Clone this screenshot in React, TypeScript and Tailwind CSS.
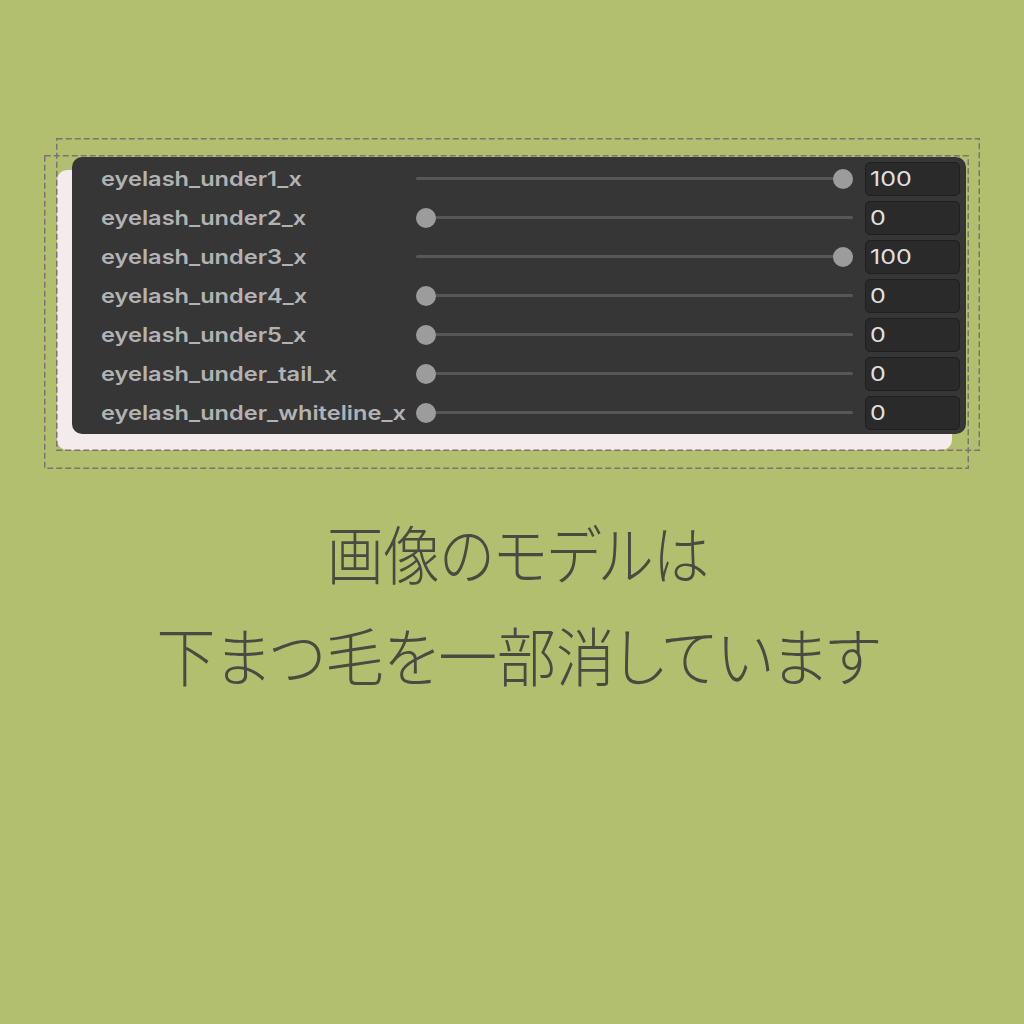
import React from "react";

type Param = { name: string; value: number };

const params: Param[] = [
  { name: "eyelash_under1_x", value: 100 },
  { name: "eyelash_under2_x", value: 0 },
  { name: "eyelash_under3_x", value: 100 },
  { name: "eyelash_under4_x", value: 0 },
  { name: "eyelash_under5_x", value: 0 },
  { name: "eyelash_under_tail_x", value: 0 },
  { name: "eyelash_under_whiteline_x", value: 0 },
];

const SliderRow = ({ name, value }: Param) => {
  return (
    <div className="flex items-center h-[34px] pl-[29px] pr-[6px]">
      <div className="w-[315px] whitespace-nowrap leading-none">
        <span className="inline-block origin-left scale-x-[1.18] text-[20px] font-semibold text-[#b2b2b2]">
          {name}
        </span>
      </div>
      <div className="relative w-[437px] h-5">
        <div className="absolute left-0 right-0 top-[8px] h-[3px] rounded-full bg-[#575757]" />
        <div
          className={
            value >= 100
              ? "absolute right-0 top-0 w-5 h-5 rounded-full bg-[#9c9c9c]"
              : "absolute left-0 top-0 w-5 h-5 rounded-full bg-[#9c9c9c]"
          }
        />
      </div>
      <div className="ml-[12px] w-[95px] h-[34px] flex items-center pl-[4px] rounded-[5px] bg-[#2a2a2a] border border-[#1f1f1f] leading-none">
        <span className="inline-block origin-left scale-x-[1.25] text-[20px] text-[#e0e0e0]">
          {value}
        </span>
      </div>
    </div>
  );
};

// dashed selection outline drawn over the panel
const DashedBox = ({ className }: { className: string }) => (
  <svg className={className} preserveAspectRatio="none">
    <rect
      x="0.75"
      y="0.75"
      width="calc(100% - 1.5px)"
      height="calc(100% - 1.5px)"
      fill="none"
      stroke="#7f7370"
      strokeWidth="1.5"
      strokeDasharray="6 3"
    />
  </svg>
);

export default function App() {
  return (
    <div
      className="w-full h-[1024px] bg-[#b1bf6e] overflow-hidden"
      style={{ fontFamily: "Inter, 'Noto Sans', sans-serif" }}
    >
      <div className="relative pt-[157px] pl-[72px]">
        {/* light backing card */}
        <div className="absolute left-[57px] top-[170px] w-[895px] h-[280px] rounded-[10px] bg-[#f4ecec]" />

        <div className="relative w-[894px] rounded-[10px] bg-[#363636] pt-[5px] pb-[4px] flex flex-col gap-[5px]">
          {params.map((p) => (
            <SliderRow key={p.name} {...p} />
          ))}
        </div>

        <DashedBox className="absolute left-[56px] top-[138px] w-[924px] h-[313px]" />
        <DashedBox className="absolute left-[44px] top-[155px] w-[925px] h-[314px]" />
      </div>

      <div
        className="mt-[66px] pl-[12px] flex flex-col items-center text-[64px] leading-[102px] font-light text-[#4a4a42]"
        style={{
          fontFamily: "'Noto Sans CJK JP', sans-serif",
          fontFeatureSettings: "'palt'",
        }}
      >
        <p className="scale-x-[0.88]">画像のモデルは</p>
        <p className="scale-x-[0.92]">下まつ毛を一部消しています</p>
      </div>
    </div>
  );
}
